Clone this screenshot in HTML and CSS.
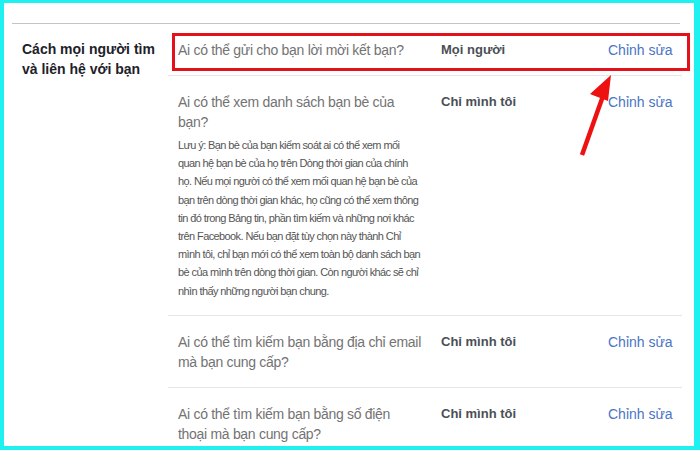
FILE: index.html
```html
<!DOCTYPE html>
<html lang="vi">
<head>
<meta charset="utf-8">
<title>Cài đặt quyền riêng tư</title>
<link rel="stylesheet" href="styles.css">
</head>
<body>
<div class="frame">
  <section class="section">
    <h3 class="section-title">Cách mọi người tìm và liên hệ với bạn</h3>
    <div class="rows">
      <div class="row">
        <div class="question">Ai có thể gửi cho bạn lời mời kết bạn?</div>
        <div class="value">Mọi người</div>
        <a class="edit" href="#">Chỉnh sửa</a>
      </div>
      <div class="row">
        <div class="question">Ai có thể xem danh sách bạn bè của bạn?
          <p class="note">Lưu ý: Bạn bè của bạn kiểm soát ai có thể xem mối quan hệ bạn bè của họ trên Dòng thời gian của chính họ. Nếu mọi người có thể xem mối quan hệ bạn bè của bạn trên dòng thời gian khác, họ cũng có thể xem thông tin đó trong Bảng tin, phần tìm kiếm và những nơi khác trên Facebook. Nếu bạn đặt tùy chọn này thành Chỉ mình tôi, chỉ bạn mới có thể xem toàn bộ danh sách bạn bè của mình trên dòng thời gian. Còn người khác sẽ chỉ nhìn thấy những người bạn chung.</p>
        </div>
        <div class="value">Chỉ mình tôi</div>
        <a class="edit" href="#">Chỉnh sửa</a>
      </div>
      <div class="row">
        <div class="question">Ai có thể tìm kiếm bạn bằng địa chỉ email mà bạn cung cấp?</div>
        <div class="value">Chỉ mình tôi</div>
        <a class="edit" href="#">Chỉnh sửa</a>
      </div>
      <div class="row">
        <div class="question">Ai có thể tìm kiếm bạn bằng số điện thoại mà bạn cung cấp?</div>
        <div class="value">Chỉ mình tôi</div>
        <a class="edit" href="#">Chỉnh sửa</a>
      </div>
    </div>
  </section>

  <div class="highlight"></div>
  <svg class="arrow" width="700" height="450" viewBox="0 0 700 450">
    <line x1="582" y1="155" x2="603" y2="96" stroke="#ee1111" stroke-width="4.5" stroke-linecap="butt"/>
    <polygon points="611,75 590,94 608,101" fill="#ee1111"/>
  </svg>
</div>
</body>
</html>
```

FILE: styles.css
```css
html, body {
  margin: 0;
  padding: 0;
  background: #ffffff;
}

.frame {
  position: relative;
  width: 700px;
  height: 450px;
  box-sizing: border-box;
  border-style: solid;
  border-color: #1ff0f0;
  border-width: 3px 6px 4px 4px;
  background: #ffffff;
  overflow: hidden;
  font-family: "Liberation Sans", Arial, sans-serif;
}

.section {
  display: flex;
  margin: 20px 14px 0 8px;
  border-top: 1px solid #c4c4c4;
}

.section-title {
  width: 146px;
  flex: none;
  margin: 0;
  padding: 15px 0 0 10px;
  font-size: 14px;
  line-height: 20px;
  font-weight: bold;
  color: #1d2129;
}

.rows {
  flex: 1;
}

.row {
  display: grid;
  grid-template-columns: 263px 167px 1fr;
  padding: 16px 9px 15px 10px;
  border-top: 1px solid #e6e6e6;
  align-items: start;
}

.row:first-child {
  border-top: none;
}

.question {
  width: 244px;
  font-size: 14px;
  line-height: 20px;
  letter-spacing: -0.3px;
  color: #737373;
}

.note {
  margin: 4px 0 0;
  font-size: 11px;
  line-height: 18.2px;
  letter-spacing: -0.6px;
  color: #555555;
}

.value {
  font-size: 13px;
  line-height: 20px;
  font-weight: bold;
  color: #4b4f56;
  white-space: nowrap;
}

.edit {
  font-size: 14px;
  line-height: 20px;
  color: #4a74c4;
  text-decoration: none;
  white-space: nowrap;
}

.highlight {
  position: absolute;
  left: 168px;
  top: 30px;
  width: 518px;
  height: 38px;
  box-sizing: border-box;
  border: 3px solid #e3121a;
}

.arrow {
  position: absolute;
  left: -4px;
  top: -3px;
  pointer-events: none;
}
```
